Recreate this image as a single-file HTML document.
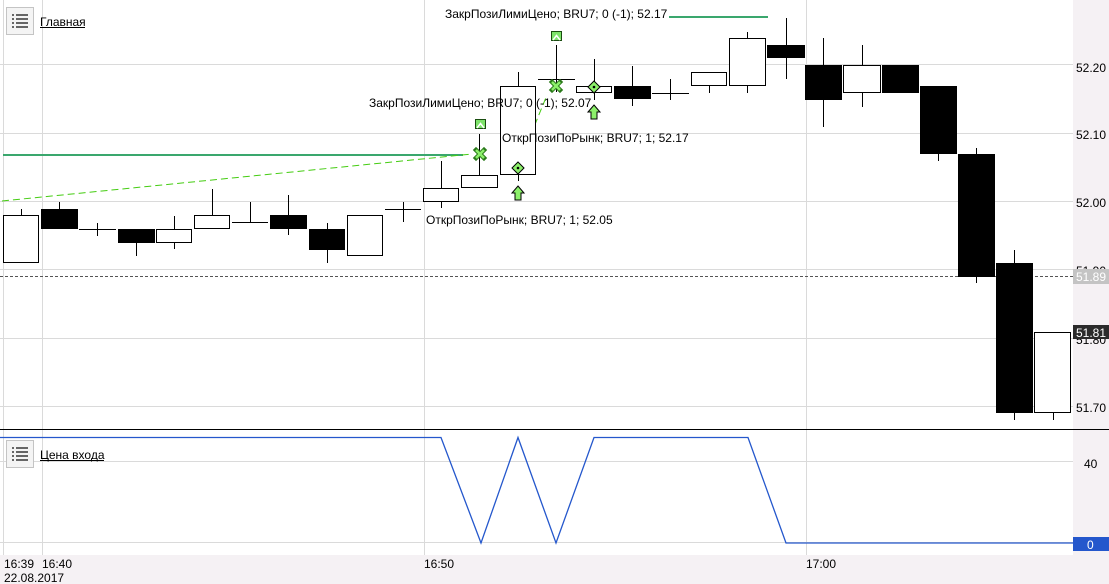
<!DOCTYPE html>
<html><head><meta charset="utf-8"><style>
html,body{margin:0;padding:0;background:#fff;}
svg{display:block;font-family:"Liberation Sans","DejaVu Sans",sans-serif;}
</style></head><body>
<svg width="1109" height="584" viewBox="0 0 1109 584" xmlns="http://www.w3.org/2000/svg" shape-rendering="crispEdges">
<rect x="0" y="0" width="1109" height="584" fill="#fff"/>
<rect x="1073" y="0" width="36" height="584" fill="#f5f1f4"/>
<rect x="0" y="555" width="1109" height="29" fill="#f5f1f4"/>
<g stroke="#dadada" stroke-width="1">
<line x1="3.5" y1="0" x2="3.5" y2="555"/>
<line x1="42.5" y1="0" x2="42.5" y2="555"/>
<line x1="424.5" y1="0" x2="424.5" y2="555"/>
<line x1="806.5" y1="0" x2="806.5" y2="555"/>
<line x1="0" y1="64.5" x2="1073" y2="64.5"/>
<line x1="0" y1="133.5" x2="1073" y2="133.5"/>
<line x1="0" y1="201.5" x2="1073" y2="201.5"/>
<line x1="0" y1="269.5" x2="1073" y2="269.5"/>
<line x1="0" y1="338.5" x2="1073" y2="338.5"/>
<line x1="0" y1="406.5" x2="1073" y2="406.5"/>
<line x1="0" y1="461.5" x2="1073" y2="461.5"/>
<line x1="0" y1="542.5" x2="1073" y2="542.5"/>
</g>
<line x1="0" y1="276.5" x2="1073" y2="276.5" stroke="#555" stroke-dasharray="3,2"/>
<line x1="0" y1="429.5" x2="1109" y2="429.5" stroke="#000"/>
<line x1="3" y1="155" x2="463" y2="155" stroke="#3aa76d" stroke-width="2"/>
<line x1="669" y1="17" x2="768" y2="17" stroke="#3aa76d" stroke-width="2"/>
<g stroke="#44cc11" stroke-width="1" stroke-dasharray="7,4" fill="none" shape-rendering="auto">
<line x1="2" y1="201" x2="472" y2="154"/>
<line x1="518" y1="166" x2="547" y2="95"/>
</g>
<g stroke="#000" stroke-width="1">
<line x1="21.5" y1="209" x2="21.5" y2="215"/><rect x="3.5" y="215.5" width="35" height="47" fill="#fff"/>
<line x1="59.5" y1="202" x2="59.5" y2="209"/><rect x="41.5" y="209.5" width="36" height="19" fill="#000"/>
<line x1="79" y1="229.5" x2="116" y2="229.5"/><line x1="97.5" y1="223" x2="97.5" y2="236"/>
<line x1="136.5" y1="243" x2="136.5" y2="256"/><rect x="118.5" y="229.5" width="36" height="13" fill="#000"/>
<line x1="174.5" y1="216" x2="174.5" y2="249"/><rect x="156.5" y="229.5" width="35" height="13" fill="#fff"/>
<line x1="212.5" y1="189" x2="212.5" y2="215"/><rect x="194.5" y="215.5" width="35" height="13" fill="#fff"/>
<line x1="232" y1="222.5" x2="268" y2="222.5"/><line x1="250.5" y1="202" x2="250.5" y2="222"/>
<line x1="288.5" y1="195" x2="288.5" y2="235"/><rect x="270.5" y="215.5" width="36" height="13" fill="#000"/>
<line x1="327.5" y1="223" x2="327.5" y2="263"/><rect x="309.5" y="229.5" width="35" height="20" fill="#000"/>
<rect x="347.5" y="215.5" width="35" height="40" fill="#fff"/>
<line x1="385" y1="209.5" x2="421" y2="209.5"/><line x1="403.5" y1="202" x2="403.5" y2="222"/>
<line x1="441.5" y1="161" x2="441.5" y2="208"/><rect x="423.5" y="188.5" width="35" height="13" fill="#fff"/>
<line x1="479.5" y1="134" x2="479.5" y2="175"/><rect x="461.5" y="175.5" width="36" height="12" fill="#fff"/>
<line x1="518.5" y1="72" x2="518.5" y2="181"/><rect x="500.5" y="86.5" width="35" height="88" fill="#fff"/>
<line x1="538" y1="79.5" x2="575" y2="79.5"/><line x1="556.5" y1="45" x2="556.5" y2="92"/>
<line x1="594.5" y1="59" x2="594.5" y2="100"/><rect x="576.5" y="86.5" width="35" height="6" fill="#fff"/>
<line x1="632.5" y1="66" x2="632.5" y2="106"/><rect x="614.5" y="86.5" width="36" height="12" fill="#000"/>
<line x1="652" y1="93.5" x2="689" y2="93.5"/><line x1="670.5" y1="79" x2="670.5" y2="100"/>
<line x1="709.5" y1="86" x2="709.5" y2="93"/><rect x="691.5" y="72.5" width="35" height="13" fill="#fff"/>
<line x1="747.5" y1="32" x2="747.5" y2="93"/><rect x="729.5" y="38.5" width="36" height="47" fill="#fff"/>
<line x1="786.5" y1="18" x2="786.5" y2="79"/><rect x="767.5" y="45.5" width="37" height="12" fill="#000"/>
<line x1="823.5" y1="38" x2="823.5" y2="127"/><rect x="805.5" y="65.5" width="36" height="34" fill="#000"/>
<line x1="862.5" y1="45" x2="862.5" y2="107"/><rect x="843.5" y="65.5" width="37" height="27" fill="#fff"/>
<rect x="882.5" y="65.5" width="36" height="27" fill="#000"/>
<line x1="938.5" y1="86" x2="938.5" y2="161"/><rect x="920.5" y="86.5" width="36" height="67" fill="#000"/>
<line x1="976.5" y1="148" x2="976.5" y2="283"/><rect x="958.5" y="154.5" width="36" height="122" fill="#000"/>
<line x1="1014.5" y1="250" x2="1014.5" y2="420"/><rect x="996.5" y="263.5" width="36" height="149" fill="#000"/>
<line x1="1053.5" y1="413" x2="1053.5" y2="420"/><rect x="1034.5" y="332.5" width="36" height="80" fill="#fff"/>
</g>
<g shape-rendering="auto">
<g><rect x="475.5" y="119.5" width="10" height="9" fill="#7de36a" stroke="#1a4d10"/><polyline points="477,128 480.5,123.5 484,128" fill="none" stroke="#fff" stroke-width="1.5"/></g>
<g transform="translate(76,-88)"><rect x="475.5" y="119.5" width="10" height="9" fill="#7de36a" stroke="#1a4d10"/><polyline points="477,128 480.5,123.5 484,128" fill="none" stroke="#fff" stroke-width="1.5"/></g>
<g stroke="#2a7a1a" stroke-width="4.5" stroke-linecap="square"><path d="M476 150 L484 158 M484 150 L476 158"/><path d="M552 82 L560 90 M560 82 L552 90"/></g>
<g stroke="#8cf06a" stroke-width="2.5"><path d="M476 150 L484 158 M484 150 L476 158"/><path d="M552 82 L560 90 M560 82 L552 90"/></g>
<g fill="#8cf06a" stroke="#000" stroke-width="1"><path d="M518 162 L524 168 L518 174 L512 168 Z"/><path d="M594 81 L600 87 L594 93 L588 87 Z"/></g>
<circle cx="518" cy="168" r="1.3" fill="#000"/><circle cx="594" cy="87" r="1.3" fill="#000"/>
<g fill="#8cf06a" stroke="#000" stroke-width="1"><path d="M518 186 L524 193 L521 193 L521 200 L515 200 L515 193 L512 193 Z"/><path d="M594 105 L600 112 L597 112 L597 119 L591 119 L591 112 L588 112 Z"/></g>
</g>
<g font-size="12" fill="#000">
<text x="445" y="18">ЗакрПозиЛимиЦено; BRU7; 0 (-1); 52.17</text>
<text x="369" y="107">ЗакрПозиЛимиЦено; BRU7; 0 (-1); 52.07</text>
<text x="502" y="142">ОткрПозиПоРынк; BRU7; 1; 52.17</text>
<text x="426" y="224">ОткрПозиПоРынк; BRU7; 1; 52.05</text>
<text x="1076" y="72">52.20</text>
<text x="1076" y="139">52.10</text>
<text x="1076" y="207">52.00</text>
<text x="1076" y="275">51.90</text>
<text x="1076" y="344">51.80</text>
<text x="1076" y="412">51.70</text>
<text x="1084" y="468">40</text>
</g>
<rect x="1073" y="269" width="36" height="15" fill="#c4c4c4"/>
<text x="1076" y="281" font-size="12" fill="#fff">51.89</text>
<rect x="1073" y="325" width="36" height="14" fill="#2b2b2b"/>
<text x="1076" y="337" font-size="12" fill="#fff">51.81</text>
<polyline shape-rendering="auto" points="0,437.5 441,437.5 481,543 518,437.5 556,543 594,437.5 748,437.5 786,543 1073,543" fill="none" stroke="#2457cc" stroke-width="1.3"/>
<rect x="1073" y="537" width="36" height="14" fill="#2457cc"/>
<text x="1087" y="549" font-size="12" fill="#fff">0</text>
<g>
<rect x="6.5" y="7.5" width="27" height="27" fill="#f4f4f4" stroke="#c4c4c4"/>
<g fill="#666"><rect x="12" y="14" width="2" height="2"/><rect x="16" y="14" width="12" height="2"/><rect x="12" y="18" width="2" height="2"/><rect x="16" y="18" width="12" height="2"/><rect x="12" y="22" width="2" height="2"/><rect x="16" y="22" width="12" height="2"/><rect x="12" y="26" width="2" height="2"/><rect x="16" y="26" width="12" height="2"/></g>
<text x="40" y="26" font-size="12" fill="#000">Главная</text>
<line x1="40" y1="27.5" x2="85" y2="27.5" stroke="#000"/>
</g>
<g>
<rect x="6.5" y="440.5" width="27" height="27" fill="#f4f4f4" stroke="#c4c4c4"/>
<g fill="#666"><rect x="12" y="447" width="2" height="2"/><rect x="16" y="447" width="12" height="2"/><rect x="12" y="451" width="2" height="2"/><rect x="16" y="451" width="12" height="2"/><rect x="12" y="455" width="2" height="2"/><rect x="16" y="455" width="12" height="2"/><rect x="12" y="459" width="2" height="2"/><rect x="16" y="459" width="12" height="2"/></g>
<text x="40" y="459" font-size="12" fill="#000">Цена входа</text>
<line x1="40" y1="460.5" x2="104" y2="460.5" stroke="#000"/>
</g>
<g font-size="12" fill="#000">
<text x="4" y="568">16:39</text>
<text x="42" y="568">16:40</text>
<text x="424" y="568">16:50</text>
<text x="806" y="568">17:00</text>
<text x="4" y="582">22.08.2017</text>
</g>
</svg>
</body></html>
